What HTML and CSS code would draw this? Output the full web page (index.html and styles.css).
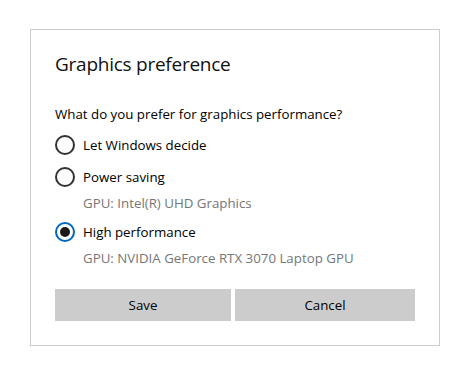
FILE: index.html
```html
<!DOCTYPE html>
<html>
<head>
<meta charset="utf-8">
<link rel="stylesheet" href="styles.css">
</head>
<body>
<div class="dialog">
  <h1 class="title">Graphics preference</h1>
  <p class="question">What do you prefer for graphics performance?</p>
  <div class="options">
    <div class="option">
      <span class="radio"></span>
      <span class="label">Let Windows decide</span>
    </div>
    <div class="option">
      <span class="radio"></span>
      <span class="label">Power saving</span>
    </div>
    <div class="sub">GPU: Intel(R) UHD Graphics</div>
    <div class="option">
      <span class="radio checked"></span>
      <span class="label">High performance</span>
    </div>
    <div class="sub">GPU: NVIDIA GeForce RTX 3070 Laptop GPU</div>
  </div>
  <div class="buttons">
    <button class="btn">Save</button>
    <button class="btn">Cancel</button>
  </div>
</div>
</body>
</html>
```
FILE: styles.css
```css
html, body {
  margin: 0;
  padding: 0;
  background: #ffffff;
}
body {
  font-family: "Open Sans", "Noto Sans", sans-serif;
  color: #000000;
  padding: 29px 0 0 30px;
}
.dialog {
  box-sizing: border-box;
  width: 410px;
  height: 317px;
  border: 1px solid #cccccc;
  padding: 20px 24px 0 24px;
}
.title {
  margin: 0;
  font-size: 19px;
  font-weight: 400;
  line-height: 28px;
  color: #111111;
  letter-spacing: -0.25px;
}
.question {
  margin: 26px 0 0 0;
  font-size: 13.3px;
  line-height: 20px;
}
.options {
  margin-top: 5px;
  display: flex;
  flex-direction: column;
}
.option {
  display: flex;
  align-items: center;
  height: 32px;
  gap: 8px;
}
.radio {
  box-sizing: border-box;
  width: 20px;
  height: 20px;
  border: 2px solid #333333;
  border-radius: 50%;
  display: flex;
  align-items: center;
  justify-content: center;
}
.radio.checked {
  border-color: #0067c0;
}
.radio.checked::after {
  content: "";
  width: 10px;
  height: 10px;
  border-radius: 50%;
  background: #1a1a1a;
}
.label {
  font-size: 13.3px;
}
.sub {
  font-size: 13.3px;
  color: #767676;
  padding-left: 28px;
  line-height: 22px;
  margin-top: -1px;
  margin-bottom: 2px;
}
.buttons {
  margin-top: 18px;
  display: grid;
  grid-template-columns: 176fr 180fr;
  gap: 4px;
}
.btn {
  height: 32px;
  border: none;
  background: #cccccc;
  font-family: inherit;
  font-size: 13.3px;
  color: #000000;
  padding: 0;
}
```
